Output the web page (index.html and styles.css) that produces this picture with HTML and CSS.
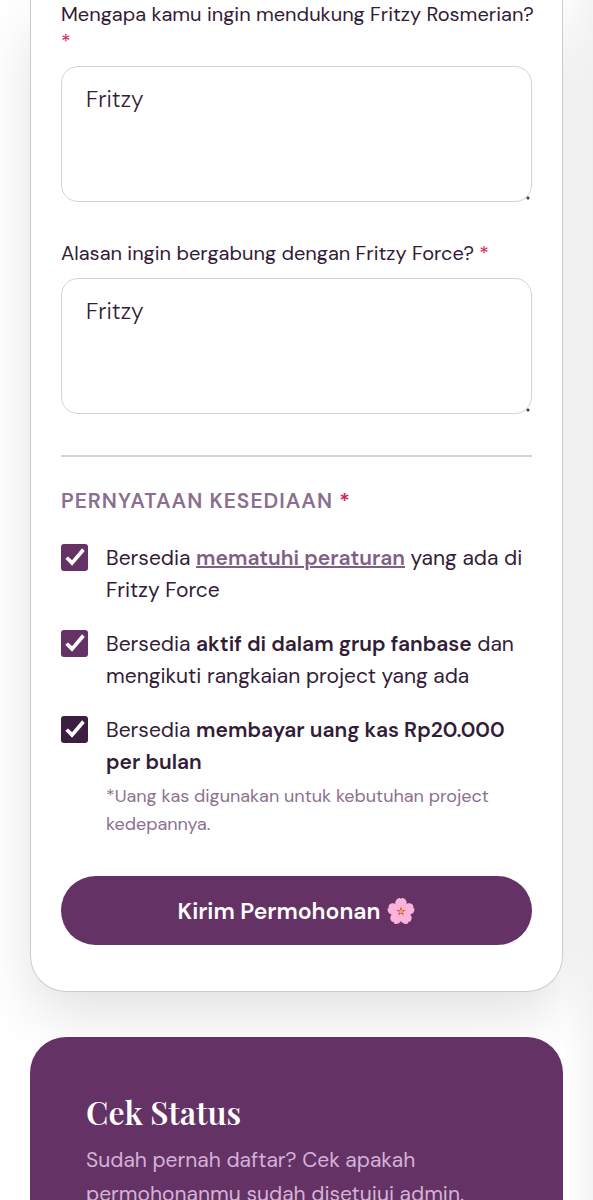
FILE: index.html
```html
<!DOCTYPE html>
<html lang="id">
<head>
<meta charset="utf-8">
<meta name="viewport" content="width=device-width, initial-scale=1">
<title>Fritzy Force</title>
<link rel="stylesheet" href="styles.css">
</head>
<body>
<main class="page">
  <form class="card">
    <div class="field">
      <label class="label" for="support">Mengapa kamu ingin mendukung Fritzy Rosmerian?<br><span class="required">*</span></label>
      <textarea class="textarea" id="support">Fritzy</textarea>
    </div>
    <div class="field">
      <label class="label" for="reason">Alasan ingin bergabung dengan Fritzy Force? <span class="required">*</span></label>
      <textarea class="textarea" id="reason">Fritzy</textarea>
    </div>
    <section class="agreements">
      <h2 class="section-title">PERNYATAAN KESEDIAAN <span class="required">*</span></h2>
      <div class="agreement">
        <input class="checkbox" type="checkbox" id="rules" checked>
        <label class="agreement-text" for="rules">Bersedia <a class="link" href="#">mematuhi peraturan</a> yang ada di Fritzy Force</label>
      </div>
      <div class="agreement">
        <input class="checkbox" type="checkbox" id="active" checked>
        <label class="agreement-text" for="active">Bersedia <strong>aktif di dalam grup fanbase</strong> dan mengikuti rangkaian project yang ada</label>
      </div>
      <div class="agreement">
        <input class="checkbox checkbox-dark" type="checkbox" id="dues" checked>
        <label class="agreement-text" for="dues">Bersedia <strong>membayar uang kas Rp20.000 per bulan</strong>
          <span class="note">*Uang kas digunakan untuk kebutuhan project kedepannya.</span>
        </label>
      </div>
    </section>
    <button class="submit" type="button">
      <span>Kirim Permohonan</span>
      <svg class="flower" viewBox="0 0 28 28" aria-hidden="true">
        <defs>
          <path id="petal" d="M14 15C10 12 7.500 8 8.500 4.500C9 2 11.500 .8 13.200 1L14 2L14.800 1C16.500 .8 19 2 19.500 4.500C20.500 8 18 12 14 15Z"/>
        </defs>
        <g fill="#fbb3dc">
          <use href="#petal"/>
          <use href="#petal" transform="rotate(72 14 14.500)"/>
          <use href="#petal" transform="rotate(144 14 14.500)"/>
          <use href="#petal" transform="rotate(216 14 14.500)"/>
          <use href="#petal" transform="rotate(288 14 14.500)"/>
        </g>
        <path d="M14 9.500L15.200 12.900L18.800 12.900L15.900 15L17 18.600L14 16.500L11 18.600L12.100 15L9.200 12.900L12.800 12.900Z" fill="#c2416c"/>
        <circle cx="14" cy="14.500" r="2" fill="#f7a84c"/>
        <g fill="#f7a84c"><circle cx="14" cy="10.500" r=".7"/><circle cx="18" cy="13.300" r=".7"/><circle cx="16.400" cy="18" r=".7"/><circle cx="11.600" cy="18" r=".7"/><circle cx="10" cy="13.300" r=".7"/></g>
      </svg>
    </button>
  </form>
  <section class="status">
    <h2 class="status-title">Cek Status</h2>
    <p class="status-text">Sudah pernah daftar? Cek apakah permohonanmu sudah disetujui admin.</p>
  </section>
</main>
</body>
</html>
```

FILE: styles.css
```css
* {
  box-sizing: border-box;
}

body {
  margin: 0;
  color: #321c36;
  font-family: "DM Sans", "Open Sans", sans-serif;
  font-size: 21px;
  line-height: 32px;
  background: #fff;
}

.page {
  height: 100vh;
  padding: 0 30px;
  overflow: hidden;
  display: flex;
  flex-direction: column;
  gap: 45px;
  background: linear-gradient(to left, #f4f4f4, #fff 30px);
}

.card {
  flex: none;
  padding: 1px 30px 46px;
  border: 1px solid #d2c6d4;
  border-top: 0;
  border-radius: 0 0 36px 36px;
  background: #fff;
  box-shadow: 0 24px 60px -4px rgba(0, 0, 0, 0.13);
}

.field {
  display: flex;
  flex-direction: column;
  gap: 11px;
  margin-bottom: 38px;
}

.label {
  font-size: 20px;
  line-height: 27px;
  white-space: nowrap;
}

.required {
  color: #d11f4f;
}

.textarea {
  display: block;
  width: 100%;
  height: 136px;
  padding: 16px 24px;
  border: 1px solid #d6d2d9;
  border-radius: 17px;
  background: #fff;
  color: inherit;
  font: inherit;
  font-size: 23px;
  font-weight: 300;
  resize: vertical;
}

.textarea::-webkit-resizer {
  background: radial-gradient(circle at 12px 12px, #444 1px, transparent 2px);
}

.agreements {
  display: flex;
  flex-direction: column;
  gap: 22px;
  margin-top: 41px;
  padding-top: 30px;
  border-top: 2px solid #d8d3da;
}

.section-title {
  margin: 0 0 5px;
  color: #8b6f90;
  font-size: 21px;
  font-weight: 600;
  letter-spacing: 1px;
  line-height: 28px;
}

.agreement {
  display: flex;
  align-items: flex-start;
  gap: 18px;
}

.checkbox {
  appearance: none;
  flex: none;
  width: 27px;
  height: 27px;
  margin: 2px 0 0;
  border-radius: 3px;
  background: #643264;
}

.checkbox:checked::before {
  content: "";
  display: block;
  width: 100%;
  height: 100%;
  background: #fff;
  clip-path: polygon(16% 55%, 26% 46%, 41% 60%, 78% 16%, 88% 26%, 41% 81%);
}

.checkbox-dark {
  background: #3c1e40;
}

.agreement-text {
  flex: 1;
}

strong,
.link {
  font-weight: 600;
}

.link {
  color: #805f86;
  text-decoration-thickness: 2px;
}

.note {
  display: block;
  margin-top: 4px;
  color: #8b7190;
  font-size: 18px;
  line-height: 28px;
}

.submit {
  display: flex;
  align-items: center;
  justify-content: center;
  gap: 7px;
  width: 100%;
  height: 69px;
  margin-top: 38px;
  padding: 0;
  border: 0;
  border-radius: 35px;
  background: #643264;
  color: #fff;
  font: inherit;
  font-size: 23px;
  font-weight: 600;
}

.flower {
  width: 28px;
  height: 28px;
}

.status {
  flex: none;
  padding: 51px 56px;
  border-radius: 36px;
  background: #643264;
  color: #d5b2d8;
}

.status-title {
  margin: 0;
  color: #fff;
  font-family: "Playfair Display", "Liberation Serif", serif;
  font-size: 32px;
  font-weight: 600;
  line-height: 48px;
}

.status-text {
  margin: 7px 0 0;
  line-height: 34px;
}
```
